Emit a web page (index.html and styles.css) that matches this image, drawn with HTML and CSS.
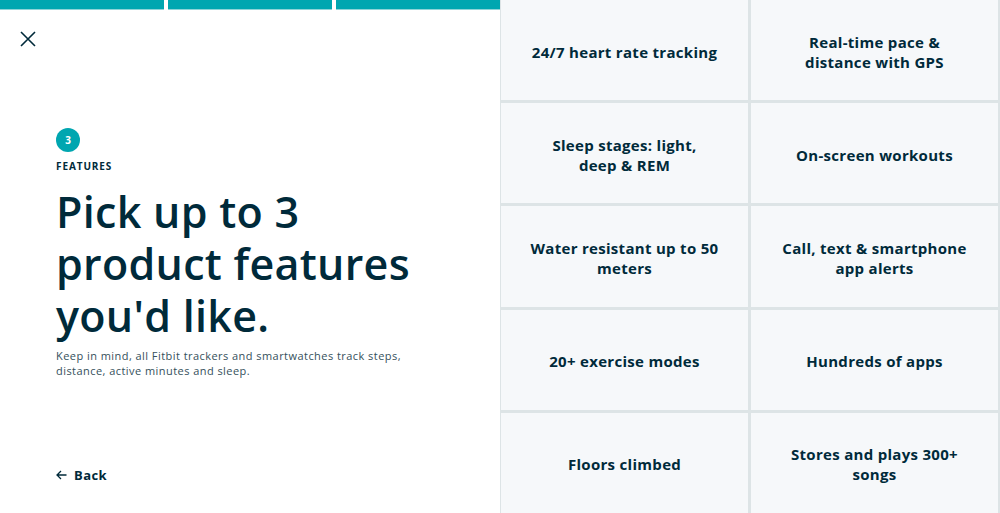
FILE: index.html
```html
<!DOCTYPE html>
<html lang="en">
<head>
    <meta charset="UTF-8" />
    <meta name="viewport" content="width=device-width, initial-scale=1.0" />
    <title>Product Quiz</title>
    <link rel="stylesheet" href="styles.css">
</head>
<body>
    <div class="page">
        <section class="intro">
            <div class="progress">
                <span class="step"></span>
                <span class="step"></span>
                <span class="step"></span>
            </div>

            <button class="close" aria-label="Close">
                <svg width="16" height="16" viewBox="0 0 16 16" fill="none" stroke="currentColor" stroke-width="1.6">
                    <path d="M1 1 L15 15 M15 1 L1 15"></path>
                </svg>
            </button>

            <div class="question">
                <span class="badge">3</span>
                <p class="eyebrow">Features</p>
                <h1>Pick up to 3 product features you'd like.</h1>
                <p class="note">Keep in mind, all Fitbit trackers and smartwatches track steps, distance, active minutes and sleep.</p>
            </div>

            <a class="back" href="#">
                <svg width="11" height="10" viewBox="0 0 11 10" fill="none" stroke="currentColor" stroke-width="1.3">
                    <path d="M10.5 5 H1 M5 1 L1 5 L5 9"></path>
                </svg>
                Back
            </a>
        </section>

        <section class="options">
            <button class="option">24/7 heart rate tracking</button>
            <button class="option">Real-time pace &amp; distance with GPS</button>
            <button class="option">Sleep stages: light, deep&nbsp;&amp;&nbsp;REM</button>
            <button class="option">On-screen workouts</button>
            <button class="option">Water resistant up to 50 meters</button>
            <button class="option">Call, text &amp; smartphone app alerts</button>
            <button class="option">20+ exercise modes</button>
            <button class="option">Hundreds of apps</button>
            <button class="option">Floors climbed</button>
            <button class="option">Stores and plays 300+ songs</button>
        </section>
    </div>
</body>
</html>
```

FILE: styles.css
```css
:root {
  --teal: #00a6b0;
  --navy: #002a3a;
  --text-medium: #35505b;
  --cell-bg: #f6f8fa;
  --line: #dde4e6;
}

body {
  margin: 0;
  font-family: 'Open Sans', sans-serif;
  color: var(--navy);
  background: #fff;
}

.page {
  display: grid;
  grid-template-columns: 500px 500px;
  height: 513px;
  overflow: hidden;
}

/* Left column */
.intro {
  display: flex;
  flex-direction: column;
}

.progress {
  display: flex;
  gap: 4px;
}

.step {
  flex: 1;
  height: 9px;
  background: var(--teal);
  border-bottom: 1px solid #8fd4d8;
}

.close {
  align-self: flex-start;
  margin: 21px 0 0 20px;
  padding: 0;
  border: none;
  background: none;
  color: var(--navy);
  width: 16px;
  height: 16px;
  cursor: pointer;
}

.close svg {
  display: block;
}

.question {
  padding: 81px 56px 0;
}

.badge {
  display: flex;
  align-items: center;
  justify-content: center;
  width: 24px;
  height: 24px;
  border-radius: 50%;
  background: var(--teal);
  color: #fff;
  font-size: 10px;
  font-weight: 700;
}

.eyebrow {
  margin: 7px 0 0;
  font-size: 10px;
  font-weight: 700;
  letter-spacing: 0.9px;
  text-transform: uppercase;
  line-height: 14px;
}

h1 {
  margin: 13px 0 0;
  font-size: 43px;
  font-weight: 600;
  line-height: 52px;
  letter-spacing: 0.3px;
  max-width: 380px;
}

.note {
  margin: 6px 0 0;
  font-size: 11px;
  line-height: 15px;
  letter-spacing: 0.45px;
  color: var(--text-medium);
  max-width: 360px;
}

.back {
  margin: auto 0 29px 56px;
  display: flex;
  align-items: center;
  gap: 7px;
  font-size: 13px;
  font-weight: 700;
  color: var(--navy);
  text-decoration: none;
  letter-spacing: 0.4px;
}

/* Right column: feature grid */
.options {
  display: grid;
  grid-template-columns: 1fr 1fr;
  grid-template-rows: repeat(5, 1fr);
  gap: 3px;
  padding: 0 2px 0 1px;
  background: var(--line);
}

.option {
  border: none;
  background: var(--cell-bg);
  font-family: 'Open Sans', sans-serif;
  font-size: 15px;
  font-weight: 700;
  line-height: 20px;
  letter-spacing: 0.3px;
  color: var(--navy);
  padding: 3px 28px 0;
  text-align: center;
  cursor: pointer;
}
```
